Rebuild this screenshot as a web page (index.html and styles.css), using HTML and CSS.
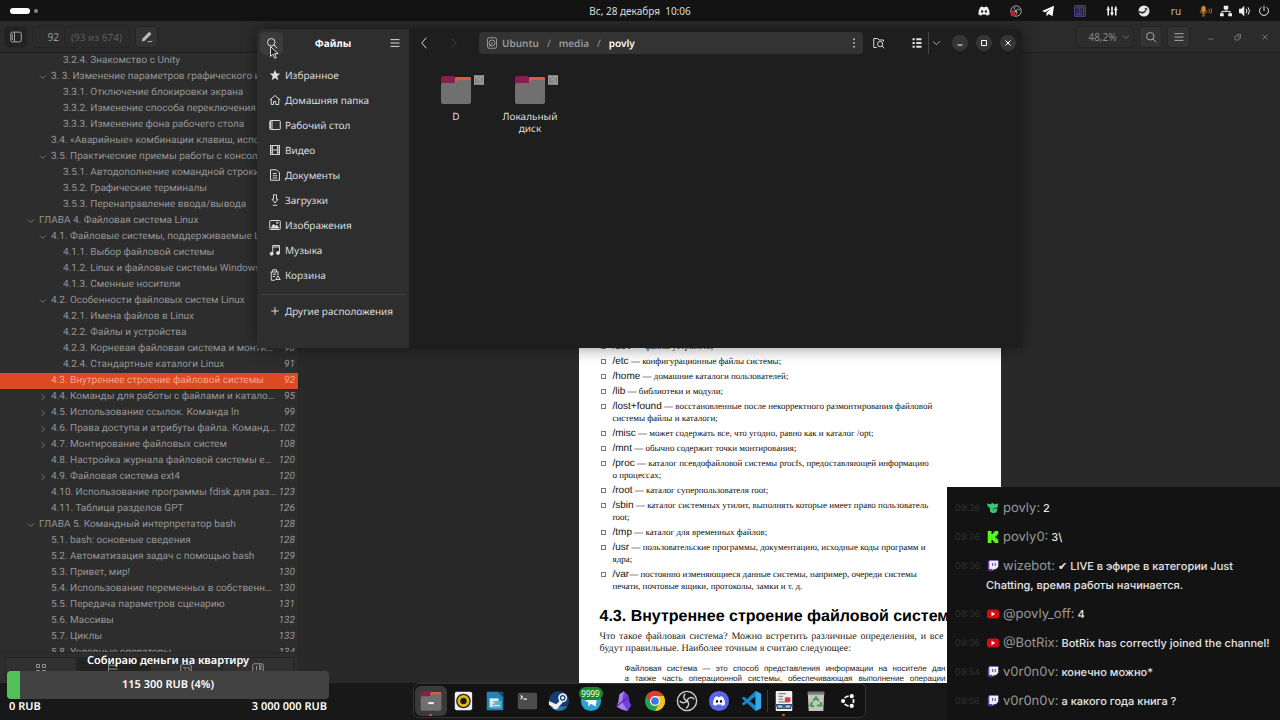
FILE: index.html
```html
<!DOCTYPE html>
<html lang="ru">
<head>
    <meta charset="UTF-8">
    <meta name="viewport" content="width=device-width, initial-scale=1.0">
    <title>Файлы</title>
    <link rel="stylesheet" href="styles.css">
</head>
<body>

    <!-- shared icons -->
    <svg class="sprite" aria-hidden="true">
        <symbol id="search" viewBox="0 0 16 16"><circle cx="7" cy="7" r="5"/><path d="M10.5 10.5 15 15"/></symbol>
        <symbol id="menu" viewBox="0 0 16 16"><path d="M2 3.5h12M2 8h12M2 12.5h12"/></symbol>
        <symbol id="down" viewBox="0 0 16 16"><path d="M2 5l6 6 6-6"/></symbol>
        <symbol id="right" viewBox="0 0 16 16"><path d="M5 2l6 6-6 6"/></symbol>
        <symbol id="left" viewBox="0 0 16 16"><path d="M11 1L5 8l6 7"/></symbol>
        <symbol id="close" viewBox="0 0 16 16"><path d="M3 3l10 10M13 3L3 13"/></symbol>
        <symbol id="min" viewBox="0 0 16 16"><path d="M3 12h10"/></symbol>
        <symbol id="max" viewBox="0 0 16 16"><path d="M3 3h10v10H3z"/></symbol>
        <symbol id="disk" viewBox="0 0 16 16"><rect x="2" y="1" width="12" height="14" rx="2"/><circle cx="8" cy="8" r="4"/><path d="M8 8l-4 5M8 7v2"/></symbol>
        <symbol id="folder" viewBox="0 0 32 30">
            <path d="M2 2h28q1 0 1 1v7H2z" fill="#e0583f" stroke="none"/>
            <path d="M1 3q0-2 2-2h10q2 0 3 2h-1v7H1z" fill="#8a1d50" stroke="none"/>
            <path d="M1 10q0-2 2-2h10q2 0 3-1.500t3-1.500h10q2 0 2 2v20q0 2-2 2H3q-2 0-2-2z" fill="#707070" stroke="none"/>
        </symbol>
        <symbol id="twitch" viewBox="0 0 16 16">
            <path d="M3 0h12v9l-5 5H7l-3 2v-2H1V3z" fill="#5d3aa8" stroke="none"/>
            <path d="M3 1h12v8l-3 3H9l-2 2v-2H3z" fill="#eee" stroke="none"/>
            <path d="M7.500 4v4M11 4v4" stroke="#5d3aa8"/>
        </symbol>
        <symbol id="youtube" viewBox="0 0 16 16"><rect y="2" width="16" height="12" rx="3" fill="#d80b12" stroke="none"/><path d="M6 5l5 3-5 3z" fill="#fff" stroke="none"/></symbol>
        <symbol id="discord" viewBox="0 0 16 16">
            <path d="M3 3q2-1 3-1l1 1h2l1-1q1 0 3 1 3 5 2.500 9.500Q13 14 11.500 14l-1-1.500h-5l-1 1.500Q3 14 .5 12.500 0 8 3 3z" fill="currentColor" stroke="none"/>
            <ellipse class="eye" cx="5.500" cy="8.500" rx="1.400" ry="1.600"/><ellipse class="eye" cx="10.500" cy="8.500" rx="1.400" ry="1.600"/>
        </symbol>
        <symbol id="obs" viewBox="0 0 24 24">
            <circle cx="12" cy="12" r="10.500" fill="#161616" stroke="#d0d0d0" stroke-width="1.500"/>
            <path d="M10 4c-3 3-1 7 2 8M12 12c1-4 5-5 8-2M12 12c3 2 2 6-1 8M12 12c-3 3-6 2-8 0" stroke="#d0d0d0" stroke-width="1.500"/>
            <circle cx="12" cy="12" r="1.500" fill="#d0d0d0" stroke="none"/>
        </symbol>
        <symbol id="steam" viewBox="0 0 24 24">
            <circle cx="16" cy="8.500" r="4" stroke="currentColor" stroke-width="1.800"/><circle cx="16" cy="8.500" r="1.800" fill="currentColor" stroke="none"/>
            <path d="M1 12l8 3.500 4-4 3 2-4 4.500q-1 3-4 3-2 0-3-2.500L1 16z" fill="currentColor" stroke="none"/>
        </symbol>
    </svg>

    <div class="desktop">

        <header class="topbar">
            <button class="workspaces" type="button" aria-label="Рабочие места"><span class="pill"></span><span class="dot"></span></button>
            <button class="clock" type="button">Вс, 28 декабря&nbsp; 10:06</button>
            <div class="tray">
                <button type="button" aria-label="Discord"><svg><use href="#discord"/></svg></button>
                <button type="button" aria-label="OBS">
                    <svg viewBox="0 0 24 24"><use href="#obs"/><circle cx="6" cy="18" r="5" fill="#d5152c" stroke="none"/></svg>
                </button>
                <button type="button" aria-label="Telegram">
                    <svg viewBox="0 0 16 16"><path d="M0 8L16 1l-2 14-5-3-3 3v-5l6-5-8 4.500z" fill="#fff" stroke="none"/></svg>
                </button>
                <button type="button" aria-label="Микшер">
                    <svg class="purple" viewBox="0 0 16 16"><path d="M1 1h14v14H1zM4 4v8M7 4v8M9.500 4v8M12.500 4v8M3 3h10M3 13h10"/></svg>
                </button>
                <button type="button" aria-label="Эквалайзер">
                    <svg viewBox="0 0 16 16"><path d="M3 2v12M8 2v12M13 2v12M1 6h4M6 11h4M11 6h4" stroke="#fff" stroke-width="2"/></svg>
                </button>
                <button type="button" aria-label="Steam">
                    <svg viewBox="0 0 24 24"><circle cx="12" cy="12" r="11" fill="#e8e8e8" stroke="none"/><path d="M1 13l8 3 5-3 4-5" stroke="#222" stroke-width="3"/><circle cx="16" cy="8" r="3" fill="#222"/></svg>
                </button>
                <button type="button" class="lang">ru</button>
                <button type="button" class="status" aria-label="Система">
                    <svg class="mic" viewBox="0 0 20 16"><rect x="4" y="1" width="5" height="9" rx="2.500" fill="#e08b28"/><path d="M2 7v2q1 3 4.500 3T11 9V7M6.500 12v3M4 15h5M14 5q2 3 0 6M17 4q2 4 0 8"/></svg>
                    <svg viewBox="0 0 16 16"><path d="M5 1h6v5H5zM0 11h5v4H0zM11 11h5v4h-5z" fill="#eee" stroke="none"/><path d="M8 5v3M2.500 11V8.500h11V11"/></svg>
                    <svg viewBox="0 0 16 16"><path d="M0 5h3l4-4v14l-4-4H0z" fill="#eee" stroke="none"/><path d="M9.500 5q2 3 0 6M12 3q4 5 0 10"/></svg>
                    <svg viewBox="0 0 16 16"><path d="M8 1v7M4.500 3A6 6 0 1 0 11.500 3"/></svg>
                </button>
            </div>
        </header>

        <main class="viewer">
            <div class="viewer-bar">
                <button class="box-btn pressed" type="button" aria-label="Боковая панель">
                    <svg viewBox="0 0 16 16"><rect x="1" y="1.500" width="14" height="13" rx="2"/><path d="M6 2v12M3 4v8"/></svg>
                </button>
                <div class="page-box">
                    <input type="text" value="92" aria-label="Страница">
                    <span>(93 из 674)</span>
                </div>
                <button class="box-btn" type="button" aria-label="Заметки">
                    <svg viewBox="0 0 16 16"><path d="M1 14l1-4 9-9 3 3-9 9z" fill="#bbb" stroke="none"/><path d="M9 14h6"/></svg>
                </button>
                <div class="spacer"></div>
                <button class="box-btn zoom" type="button">48,2% <svg><use href="#down"/></svg></button>
                <button class="box-btn" type="button" aria-label="Поиск"><svg><use href="#search"/></svg></button>
                <button class="box-btn" type="button" aria-label="Меню"><svg><use href="#menu"/></svg></button>
                <div class="win-btns">
                    <button type="button" aria-label="Свернуть"><svg><use href="#min"/></svg></button>
                    <button type="button" aria-label="Восстановить"><svg viewBox="0 0 16 16"><path d="M2 6h8v8H2zM6 3h8M13 3v8"/></svg></button>
                    <button type="button" aria-label="Закрыть"><svg><use href="#close"/></svg></button>
                </div>
            </div>

            <div class="viewer-body">
                <aside class="outline">
                    <ul class="toc">
                        <li class="l3"><a href="#">3.2.4. Знакомство с Unity</a></li>
                        <li class="l2"><svg><use href="#down"/></svg><a href="#">3. 3. Изменение параметров графического ин…</a></li>
                        <li class="l3"><a href="#">3.3.1. Отключение блокировки экрана</a></li>
                        <li class="l3"><a href="#">3.3.2. Изменение способа переключения я…</a></li>
                        <li class="l3"><a href="#">3.3.3. Изменение фона рабочего стола</a></li>
                        <li class="l2"><a href="#">3.4. «Аварийные» комбинации клавиш, испо…</a></li>
                        <li class="l2"><svg><use href="#down"/></svg><a href="#">3.5. Практические приемы работы с консоль…</a></li>
                        <li class="l3"><a href="#">3.5.1. Автодополнение командной строки</a></li>
                        <li class="l3"><a href="#">3.5.2. Графические терминалы</a></li>
                        <li class="l3"><a href="#">3.5.3. Перенаправление ввода/вывода</a></li>
                        <li class="l1"><svg><use href="#down"/></svg><a href="#">ГЛАВА 4. Файловая система Linux</a></li>
                        <li class="l2"><svg><use href="#down"/></svg><a href="#">4.1. Файловые системы, поддерживаемые Li…</a></li>
                        <li class="l3"><a href="#">4.1.1. Выбор файловой системы</a></li>
                        <li class="l3"><a href="#">4.1.2. Linux и файловые системы Windows</a></li>
                        <li class="l3"><a href="#">4.1.3. Сменные носители</a></li>
                        <li class="l2"><svg><use href="#down"/></svg><a href="#">4.2. Особенности файловых систем Linux</a></li>
                        <li class="l3"><a href="#">4.2.1. Имена файлов в Linux</a></li>
                        <li class="l3"><a href="#">4.2.2. Файлы и устройства</a></li>
                        <li class="l3"><a href="#">4.2.3. Корневая файловая система и монти…</a><i>90</i></li>
                        <li class="l3"><a href="#">4.2.4. Стандартные каталоги Linux</a><i>91</i></li>
                        <li class="l2 selected"><a href="#">4.3. Внутреннее строение файловой системы</a><i>92</i></li>
                        <li class="l2"><svg><use href="#right"/></svg><a href="#">4.4. Команды для работы с файлами и катало…</a><i>95</i></li>
                        <li class="l2"><svg><use href="#right"/></svg><a href="#">4.5. Использование ссылок. Команда ln</a><i>99</i></li>
                        <li class="l2"><svg><use href="#right"/></svg><a href="#">4.6. Права доступа и атрибуты файла. Команд…</a><i>102</i></li>
                        <li class="l2"><svg><use href="#right"/></svg><a href="#">4.7. Монтирование файловых систем</a><i>108</i></li>
                        <li class="l2"><a href="#">4.8. Настройка журнала файловой системы e…</a><i>120</i></li>
                        <li class="l2"><svg><use href="#right"/></svg><a href="#">4.9. Файловая система ext4</a><i>120</i></li>
                        <li class="l2"><a href="#">4.10. Использование программы fdisk для раз…</a><i>123</i></li>
                        <li class="l2"><a href="#">4.11. Таблица разделов GPT</a><i>126</i></li>
                        <li class="l1"><svg><use href="#down"/></svg><a href="#">ГЛАВА 5. Командный интерпретатор bash</a><i>128</i></li>
                        <li class="l2"><a href="#">5.1. bash: основные сведения</a><i>128</i></li>
                        <li class="l2"><a href="#">5.2. Автоматизация задач с помощью bash</a><i>129</i></li>
                        <li class="l2"><a href="#">5.3. Привет, мир!</a><i>130</i></li>
                        <li class="l2"><a href="#">5.4. Использование переменных в собственн…</a><i>130</i></li>
                        <li class="l2"><a href="#">5.5. Передача параметров сценарию</a><i>131</i></li>
                        <li class="l2"><a href="#">5.6. Массивы</a><i>132</i></li>
                        <li class="l2"><a href="#">5.7. Циклы</a><i>133</i></li>
                        <li class="l2"><a href="#">5.8. Условные операторы</a><i>134</i></li>
                    </ul>
                    <div class="outline-tabs">
                        <button type="button" aria-label="Миниатюры"><svg viewBox="0 0 16 16"><path d="M2 2h4v4H2zM10 2h4v4h-4zM2 10h4v4H2zM10 10h4v4h-4z"/></svg></button>
                        <button type="button" class="active" aria-label="Содержание"><svg viewBox="0 0 16 16"><path d="M2 1v13h12M2 3h12M2 8h12"/></svg></button>
                        <button type="button" aria-label="Заметки"><svg viewBox="0 0 16 16"><rect x="1" y="2" width="14" height="11" rx="2"/><path d="M4 6h3v4M9 6h3v4"/></svg></button>
                        <button type="button" aria-label="Закладки"><svg viewBox="0 0 16 16"><rect x="1" y="1" width="14" height="14" rx="2"/><path d="M6 4v6M10 2v7h2V2"/></svg></button>
                    </div>
                </aside>

                <div class="canvas">
                    <article class="sheet">
                        <ul class="dirs">
                            <li><b>/dev</b> — файлы устройств;</li>
                            <li><b>/etc</b> — конфигурационные файлы системы;</li>
                            <li><b>/home</b> — домашние каталоги пользователей;</li>
                            <li><b>/lib</b> — библиотеки и модули;</li>
                            <li><b>/lost+found</b> — восстановленные после некорректного размонтирования файловой<br>системы файлы и каталоги;</li>
                            <li><b>/misc</b> — может содержать все, что угодно, равно как и каталог /opt;</li>
                            <li><b>/mnt</b> — обычно содержит точки монтирования;</li>
                            <li><b>/proc</b> — каталог псевдофайловой системы procfs, предоставляющей информацию<br>о процессах;</li>
                            <li><b>/root</b> — каталог суперпользователя root;</li>
                            <li><b>/sbin</b> — каталог системных утилит, выполнять которые имеет право пользователь<br>root;</li>
                            <li><b>/tmp</b> — каталог для временных файлов;</li>
                            <li><b>/usr</b> — пользовательские программы, документацию, исходные коды программ и<br>ядра;</li>
                            <li><b>/var</b>— постоянно изменяющиеся данные системы, например, очереди системы<br>печати, почтовые ящики, протоколы, замки и т. д.</li>
                        </ul>
                        <h2>4.3. Внутреннее строение файловой системы</h2>
                        <p>Что такое файловая система? Можно встретить различные определения, и все будут правильные. Наиболее точным я считаю следующее:</p>
                        <blockquote>
                            <span>Файловая система — это способ представления информации на носителе дан</span>
                            <span>а также часть операционной системы, обеспечивающая выполнение операции</span>
                        </blockquote>
                    </article>
                </div>
            </div>
        </main>

        <footer class="dock-area">
            <nav class="dock">
                <button type="button" class="open" aria-label="Файлы">
                    <svg viewBox="0 0 32 30"><use href="#folder"/><path d="M12 18h8" stroke="#eee" stroke-width="3"/></svg>
                </button>
                <button type="button" aria-label="Rhythmbox">
                    <svg viewBox="0 0 24 24"><rect x="3" y="2" width="19" height="20" rx="2" fill="#eee"/><circle cx="12.500" cy="12" r="8" fill="#222"/><circle cx="12.500" cy="12" r="5" fill="none" stroke="#e8b90f" stroke-width="3"/><circle cx="12.500" cy="12" r="2" fill="#111"/></svg>
                </button>
                <button type="button" aria-label="Writer">
                    <svg viewBox="0 0 24 24"><path d="M3 2h12l6 6v14H3z" fill="#2583b1"/><path d="M15 2h6v6z" fill="#0e5378"/><path d="M6 9h10v10H6z" fill="#bfe0ee"/><path d="M10 12h9v8h-9z" fill="#65add0"/><path d="M7 11h8M7 14h5M11 17h6" stroke="#fff" stroke-width="1"/></svg>
                </button>
                <button type="button" aria-label="Терминал">
                    <svg viewBox="0 0 24 24"><rect x="2" y="3" width="21" height="18" rx="2" fill="#4c4c4c"/><path d="M5 6l2 2-2 2M8 10h4" stroke="#eee"/></svg>
                </button>
                <button type="button" aria-label="Steam">
                    <svg class="steam-dock" viewBox="0 0 24 24"><circle cx="12" cy="12" r="11" fill="#153d70"/><path d="M3 18a11 11 0 0 0 18 0z" fill="#2878b0"/><use href="#steam"/></svg>
                </button>
                <button type="button" aria-label="Telegram">
                    <svg viewBox="0 0 24 24"><circle cx="12" cy="12" r="11" fill="#2ba2d4"/><path d="M5 12l14-6-2 12-5-3-3 3v-5z" fill="#fff"/></svg>
                    <span class="badge">9999</span>
                </button>
                <button type="button" aria-label="Obsidian">
                    <svg viewBox="0 0 24 24"><path d="M13 1l5 5 1 7 2 4-4 6-7-2-5-3 2-5 1-8z" fill="#7540d8"/><path d="M13 1l-2 12 6 10-7-2-5-3 2-5 1-8z" fill="#a980ed"/><path d="M11 13l7-5M11 13l-6 5" stroke="#4c23a4"/></svg>
                </button>
                <button type="button" aria-label="Chrome">
                    <svg viewBox="0 0 24 24"><circle cx="12" cy="12" r="11" fill="#23a455"/><path d="M2.500 6.500A11 11 0 0 1 21.500 6.500H12L7.500 15z" fill="#df3b30"/><path d="M21.500 6.500A11 11 0 0 1 12 23l5-9-5-7.500z" fill="#f6c51b"/><circle cx="12" cy="12" r="5.500" fill="#fff"/><circle cx="12" cy="12" r="4.200" fill="#3978e6"/></svg>
                </button>
                <button type="button" aria-label="OBS"><svg viewBox="0 0 24 24"><use href="#obs"/></svg></button>
                <button type="button" aria-label="Discord">
                    <svg class="discord-dock" viewBox="0 0 24 24"><circle cx="12" cy="12" r="11" fill="#5964e8"/><use href="#discord" x="5" y="5" width="14" height="14"/></svg>
                </button>
                <button type="button" aria-label="VS Code">
                    <svg viewBox="0 0 24 24"><path d="M17 1l6 3v16l-6 3L2 9l2-2 13 10V7L4 17l-2-2z" fill="#1687cb"/><path d="M17 1l6 3v16l-6 3z" fill="#35a8eb"/></svg>
                </button>
                <span class="dock-sep"></span>
                <button type="button" class="running" aria-label="Документы">
                    <svg viewBox="0 0 24 24"><rect x="3" y="1" width="18" height="22" rx="1" fill="#eee"/><path d="M6 4h8M6 7h5M6 10h5M6 13h12" stroke="#888"/><path d="M13 8h6v5h-6z" fill="#dd3c38"/><path d="M4 16h7v4H5zM13 16h7l-1 4h-6zM11 17h2" fill="#adc2d8" stroke="#294b6b" stroke-width="1.500"/></svg>
                </button>
                <button type="button" aria-label="Корзина">
                    <svg viewBox="0 0 24 24"><path d="M3 2h18l-1 21H4z" fill="#c4c4c0"/><path d="M3 2h18v3H3z" fill="#777"/><path d="M9 12l3-4 3 4M17 13l1 4h-5M10 18l-4-1 2-4" fill="none" stroke="#36a344" stroke-width="2.200"/></svg>
                </button>
                <button type="button" aria-label="Приложения">
                    <svg class="ubuntu" viewBox="0 0 24 24"><circle cx="13" cy="12" r="6.500" stroke="#fff" stroke-width="2.500"/><g fill="#fff" stroke="#151515" stroke-width="1.500"><circle cx="5.500" cy="12" r="3.500"/><circle cx="17" cy="5.500" r="3.500"/><circle cx="17" cy="18.500" r="3.500"/></g></svg>
                </button>
            </nav>
        </footer>

        <section class="files">
            <aside class="places">
                <div class="places-head">
                    <button type="button" class="hovered" aria-label="Поиск"><svg><use href="#search"/></svg></button>
                    <h1>Файлы</h1>
                    <button type="button" aria-label="Меню"><svg><use href="#menu"/></svg></button>
                </div>
                <nav>
                    <a href="#"><svg viewBox="0 0 16 16"><path d="M8 1l2 5h5l-4 3.500 1.500 5.500L8 12l-4.500 3L5 9.500 1 6h5z" fill="currentColor" stroke="none"/></svg>Избранное</a>
                    <a href="#"><svg viewBox="0 0 16 16"><path d="M1 8l7-6 7 6M3 7v7h3v-4h3v4h4V7"/></svg>Домашняя папка</a>
                    <a href="#"><svg viewBox="0 0 16 16"><rect x="1" y="2" width="14" height="12" rx="1"/><path d="M4 2v12M2 3v10"/></svg>Рабочий стол</a>
                    <a href="#"><svg viewBox="0 0 16 16"><rect x="2" y="2" width="12" height="12"/><path d="M4.500 2v12M11.500 2v12M5 8h6M2 5h2M2 8h2M2 11h2M12 5h2M12 8h2M12 11h2"/></svg>Видео</a>
                    <a href="#"><svg viewBox="0 0 16 16"><path d="M2 1h8l4 4v10H2zM5 6h5M5 9h6M5 12h6"/></svg>Документы</a>
                    <a href="#"><svg viewBox="0 0 16 16"><path d="M6 1h4v6h2l-4 5-4-5h2zM5 15h6"/></svg>Загрузки</a>
                    <a href="#"><svg viewBox="0 0 16 16"><rect x="1" y="2" width="14" height="12" rx="1"/><path d="M3 12l3-5 2 3 2-2 3 4z" fill="currentColor"/><circle cx="11" cy="5" r="1"/></svg>Изображения</a>
                    <a href="#"><svg viewBox="0 0 16 16"><path d="M5 13V2h9v10M5 4h9"/><circle cx="3.500" cy="13" r="2" fill="currentColor"/><circle cx="12" cy="12" r="2" fill="currentColor"/></svg>Музыка</a>
                    <a href="#"><svg viewBox="0 0 16 16"><path d="M2 4h11M5 4V1h5v3M3 4v11h5M5 7h5M5 10h3M12 5v3"/><path d="M12 9l3 5H9z"/></svg>Корзина</a>
                </nav>
                <a class="other" href="#"><svg viewBox="0 0 16 16"><path d="M8 3v10M3 8h10"/></svg>Другие расположения</a>
            </aside>

            <div class="browser">
                <div class="browser-head">
                    <button type="button" aria-label="Назад"><svg><use href="#left"/></svg></button>
                    <button type="button" disabled aria-label="Вперёд"><svg><use href="#right"/></svg></button>
                    <div class="crumbs">
                        <svg><use href="#disk"/></svg>
                        <a href="#">Ubuntu</a><span>/</span><a href="#">media</a><span>/</span><a class="current" href="#">povly</a>
                        <button type="button" aria-label="Ещё"><svg viewBox="0 0 16 16"><path d="M7 2h2v2H7zM7 7h2v2H7zM7 12h2v2H7z" fill="currentColor" stroke="none"/></svg></button>
                    </div>
                    <button type="button" aria-label="Искать в папке"><svg viewBox="0 0 16 16"><path d="M5 14H1V2h5l2 2h6v2"/><circle cx="9.500" cy="9.500" r="3.500"/><path d="M12 12l3 3"/></svg></button>
                    <div class="view-btns">
                        <button type="button" aria-label="Список"><svg viewBox="0 0 16 16"><path d="M2 3h3M2 8h3M2 13h3M7 3h7M7 8h7M7 13h7" stroke-width="2.500"/></svg></button>
                        <button type="button" aria-label="Вид"><svg><use href="#down"/></svg></button>
                    </div>
                    <div class="round-btns">
                        <button type="button" aria-label="Свернуть"><svg><use href="#min"/></svg></button>
                        <button type="button" aria-label="Развернуть"><svg><use href="#max"/></svg></button>
                        <button type="button" aria-label="Закрыть"><svg><use href="#close"/></svg></button>
                    </div>
                </div>
                <div class="icons">
                    <a href="#"><span class="thumb"><svg><use href="#folder"/></svg><svg class="emblem"><use href="#disk"/></svg></span>D</a>
                    <a href="#"><span class="thumb"><svg><use href="#folder"/></svg><svg class="emblem"><use href="#disk"/></svg></span>Локальный диск</a>
                </div>
            </div>
        </section>

        <section class="goal">
            <h2>Собираю деньги на квартиру</h2>
            <div class="goal-bar"><div class="goal-fill" style="width: 4%"></div><span>115 300 RUB (4%)</span></div>
            <div class="goal-range"><span>0 RUB</span><span>3 000 000 RUB</span></div>
        </section>

        <section class="chat">
            <div class="msg"><time>09:36</time><p><svg viewBox="0 0 16 16"><path d="M0 2l5 1 2-2 3 2 5-1-1 5-2 1 2 2-2 4-4 1-4-2V8L1 6z" fill="#3fc477" stroke="none"/><path d="M8 11l2-3 2 1" stroke="#17583a"/></svg><b>povly:</b> 2</p></div>
            <div class="msg"><time>09:36</time><p><svg viewBox="0 0 16 16"><path d="M1 0h5v4h2V2h2V0h5v5h-2v2h-2v2h2v2h2v5h-5v-2H8v-2H6v4H1z" fill="#53fc18" stroke="none"/></svg><b>povly0:</b> 3\</p></div>
            <div class="msg"><time>09:36</time><p><svg><use href="#twitch"/></svg><b>wizebot:</b> ✔ LIVE в эфире в категории Just Chatting, время работы начинается.</p></div>
            <div class="msg"><time>09:36</time><p><svg><use href="#youtube"/></svg><b>@povly_off:</b> 4</p></div>
            <div class="msg"><time>09:36</time><p><svg><use href="#youtube"/></svg><b>@BotRix:</b> BotRix has correctly joined the channel!</p></div>
            <div class="msg"><time>09:54</time><p><svg><use href="#twitch"/></svg><b>v0r0n0v:</b> конечно можно*</p></div>
            <div class="msg"><time>09:56</time><p><svg><use href="#twitch"/></svg><b>v0r0n0v:</b> а какого года книга ?</p></div>
        </section>

        <svg class="cursor" viewBox="0 0 16 24"><path d="M2 1v17l4-4 3 7 3-1-3-7h6z" fill="#222" stroke="#eee" stroke-width="1.500"/></svg>
    </div>

</body>
</html>
```

FILE: styles.css
```css
* {
    box-sizing: border-box;
}
body {
    margin: 0;
    font-family: "Noto Sans", sans-serif;
    font-size: 10px;
    line-height: 16px;
    text-rendering: geometricPrecision;
    color: #ddd;
    background: #181818;
}
h1, h2, p, ul, blockquote {
    margin: 0;
    padding: 0;
}
ul {
    list-style: none;
}
a {
    color: inherit;
    text-decoration: none;
}
button, input {
    font: inherit;
    color: inherit;
    background: none;
    border: 0;
    padding: 0;
}
button {
    display: flex;
    align-items: center;
    justify-content: center;
}
svg {
    width: 12px;
    height: 12px;
    flex: none;
    fill: none;
    stroke: currentColor;
    stroke-width: 1.3;
}
.sprite {
    display: none;
}
.desktop {
    position: relative;
    display: flex;
    flex-direction: column;
    height: 100vh;
    overflow: hidden;
}

/* top panel */
.topbar {
    display: grid;
    grid-template-columns: 1fr auto 1fr;
    align-items: center;
    height: 21px;
    background: #131313;
}
.workspaces {
    justify-self: start;
    gap: 4px;
    padding-left: 10px;
}
.pill {
    width: 20px;
    height: 6px;
    border-radius: 3px;
    background: #fff;
}
.dot {
    width: 4px;
    height: 4px;
    border-radius: 50%;
    background: #888;
}
.tray {
    display: flex;
    justify-content: flex-end;
    padding-right: 10px;
}
.tray button {
    width: 32px;
    color: #eee;
}
.tray .status {
    width: auto;
    gap: 7px;
    padding-left: 7px;
}
.tray .lang {
    color: #bbb;
}
.mic {
    width: 14px;
    color: #b87320;
}
.purple {
    color: #5e4db8;
}
.eye {
    fill: #131313;
    stroke: none;
}

/* document viewer */
.viewer {
    flex: 1;
    min-height: 0;
    display: flex;
    flex-direction: column;
    color: #959595;
    background: #292929;
}
.viewer-bar {
    display: flex;
    align-items: center;
    gap: 5px;
    height: 32px;
    padding: 0 5px 0 4px;
    background: #2b2b2b;
    border-bottom: 1px solid #1e1e1e;
}
.box-btn {
    width: 23px;
    height: 22px;
    border: 1px solid #252525;
    border-radius: 4px;
    background: #333;
    color: #aaa;
}
.box-btn.pressed {
    background: #222;
}
.box-btn.zoom {
    width: 58px;
    gap: 5px;
    padding-left: 8px;
    background: #2d2d2d;
    color: #888;
}
.box-btn.zoom svg {
    width: 8px;
}
.page-box {
    display: flex;
    align-items: center;
    width: 98px;
    height: 22px;
    border: 1px solid #252525;
    border-radius: 4px;
    color: #5c5c5c;
}
.page-box input {
    width: 32px;
    height: 20px;
    padding-right: 5px;
    margin-right: 6px;
    border-right: 1px solid #252525;
    text-align: right;
    color: #999;
}
.spacer {
    flex: 1;
}
.win-btns {
    display: flex;
    gap: 6px;
    padding-left: 5px;
}
.win-btns button {
    width: 21px;
    height: 22px;
}
.win-btns svg {
    width: 8px;
}
.viewer-body {
    flex: 1;
    min-height: 0;
    display: flex;
}
.outline {
    width: 299px;
    display: flex;
    flex-direction: column;
    background: #2d2d2d;
    border-right: 1px solid #252525;
    font-family: Roboto, sans-serif;
}
.toc {
    flex: 1;
    min-height: 0;
    overflow: hidden;
}
.toc li {
    display: flex;
    align-items: center;
    height: 16px;
    padding-right: 3px;
}
.toc a {
    flex: 1;
    white-space: nowrap;
}
.toc i {
    text-align: right;
}
.toc svg {
    width: 8px;
    height: 8px;
    margin: 0 4px 0 -12px;
}
.toc .l1 {
    padding-left: 39px;
}
.toc .l2 {
    padding-left: 51px;
}
.toc .l3 {
    padding-left: 63px;
}
.toc .selected {
    background: #dc4a24;
    color: #f3a58d;
}
.outline-tabs {
    display: flex;
    height: 31px;
    padding: 4px 4px 3px 5px;
    border-top: 1px solid #252525;
}
.outline-tabs button {
    flex: 1;
    border: 1px solid #252525;
    background: #303030;
}
.outline-tabs .active {
    background: #222;
}
.canvas {
    flex: 1;
    display: flex;
    justify-content: center;
    overflow: hidden;
}
.sheet {
    width: 422px;
    padding: 287px 57px 0 21px;
    background: #fff;
    color: #222;
    font: 10px/12px "Liberation Serif", serif;
    white-space: nowrap;
}
.dirs {
    display: flex;
    flex-direction: column;
    gap: 3px;
    padding-left: 13px;
    font-size: 9px;
    color: #111;
}
.dirs li::before {
    content: "";
    box-sizing: border-box;
    float: left;
    width: 5px;
    height: 5px;
    margin: 4px 0 0 -12px;
    border: 1px solid #777;
}
.dirs b {
    font: 10px/10px "Liberation Sans", sans-serif;
}
.sheet h2 {
    margin: 16px 0 5px;
    font: bold 16px/18px "Liberation Sans", sans-serif;
    color: #000;
}
.sheet p {
    text-align: justify;
    white-space: normal;
}
.sheet blockquote {
    width: 321px;
    margin: 9px 0 0 25px;
    font: 8px/10px "Liberation Sans", sans-serif;
}
.sheet blockquote span {
    display: block;
    white-space: normal;
    text-align-last: justify;
}

/* dock */
.dock-area {
    display: flex;
    justify-content: center;
    height: 37px;
    padding-right: 2px;
    background: #181818;
}
.dock {
    display: flex;
    align-items: center;
    height: 35px;
    padding: 0 1px;
    border: 1px solid #333;
    border-radius: 6px;
    background: #131313;
}
.dock button {
    position: relative;
    width: 32px;
    height: 30px;
}
.dock svg {
    width: 22px;
    height: 22px;
    stroke: none;
}
.dock .open {
    background: #3a3a3a;
    border-radius: 6px;
}
.dock .ubuntu {
    width: 18px;
    height: 18px;
}
.dock .open::after, .dock .running::after {
    content: "";
    position: absolute;
    bottom: 0;
    width: 3px;
    height: 2px;
    border-radius: 1px;
    background: #e0562b;
}
.dock-sep {
    width: 1px;
    height: 22px;
    background: #3a3a3a;
}
.steam-dock {
    color: #eee;
}
.discord-dock {
    color: #fff;
}
.badge {
    position: absolute;
    top: 1px;
    left: 4px;
    width: 24px;
    height: 13px;
    border-radius: 7px;
    background: #178a2d;
    color: #fff;
    font-size: 8px;
    line-height: 13px;
}

/* file manager window */
.files {
    position: absolute;
    top: 29px;
    left: 257px;
    right: 258px;
    height: 319px;
    display: flex;
    border-radius: 6px 6px 0 0;
    background: #1e1e1e;
    box-shadow: 0 0 16px rgba(0, 0, 0, 0.45);
    overflow: hidden;
}
.places {
    width: 152px;
    background: #2e2e2e;
}
.places-head {
    display: flex;
    align-items: center;
    justify-content: space-between;
    height: 28px;
    padding: 0 3px;
}
.places-head h1 {
    font-size: 10px;
    line-height: 16px;
    color: #fff;
}
.places-head button {
    width: 23px;
    height: 23px;
    border-radius: 5px;
}
.places-head .hovered {
    background: #3b3b3b;
}
.places nav {
    padding: 5px 0 7px;
}
.places a {
    display: flex;
    align-items: center;
    gap: 4px;
    height: 25px;
    padding-left: 12px;
}
.places .other {
    height: 33px;
    margin: 0 4px;
    padding-left: 8px;
    border-top: 1px solid #444;
}
.browser {
    flex: 1;
}
.browser-head {
    display: flex;
    align-items: center;
    height: 28px;
    padding: 0 6px 0 4px;
}
.browser-head button {
    width: 22px;
    height: 22px;
}
.browser-head button:disabled {
    margin: 0 14px 0 8px;
    color: #444;
}
.browser-head .crumbs {
    flex: 1;
    display: flex;
    align-items: center;
    gap: 8px;
    height: 22px;
    margin-right: 5px;
    padding-left: 7px;
    border-radius: 4px;
    background: #333;
    color: #999;
    font-weight: 600;
}
.crumbs svg {
    margin-right: -4px;
}
.crumbs span {
    font-weight: normal;
}
.crumbs .current {
    color: #fff;
}
.crumbs button {
    margin-left: auto;
    color: #ddd;
}
.view-btns {
    display: flex;
    margin-left: 16px;
}
.view-btns button + button {
    width: 16px;
    border-left: 1px solid #444;
}
.view-btns button + button svg {
    width: 9px;
}
.browser-head .round-btns {
    display: flex;
    gap: 8px;
    padding-left: 8px;
}
.browser-head .round-btns button {
    width: 16px;
    height: 16px;
    border-radius: 50%;
    background: #353535;
    color: #fff;
}
.round-btns svg {
    width: 8px;
    height: 8px;
    stroke-width: 2;
}
.icons {
    display: flex;
    gap: 10px;
    padding: 17px 15px;
}
.icons a {
    width: 64px;
    line-height: 12px;
    text-align: center;
}
.thumb {
    position: relative;
    display: flex;
    justify-content: center;
    margin-bottom: 4px;
}
.thumb svg {
    width: 32px;
    height: 32px;
}
.thumb .emblem {
    position: absolute;
    top: 1px;
    right: 4px;
    width: 10px;
    height: 10px;
    border-radius: 1px;
    background: #aaa;
    color: #666;
}

/* stream overlays */
.goal {
    position: absolute;
    left: 7px;
    bottom: 5px;
    width: 322px;
    color: #fff;
    font-size: 11px;
    font-weight: 600;
    line-height: 16px;
}
.goal h2 {
    font-size: 11px;
    font-weight: 600;
    line-height: 16px;
    text-align: center;
    margin-bottom: 2px;
}
.goal-bar {
    display: grid;
    align-items: center;
    height: 28px;
    border-radius: 4px;
    background: #424242;
    text-align: center;
    overflow: hidden;
}
.goal-bar > * {
    grid-area: 1 / 1;
}
.goal-fill {
    height: 28px;
    background: #50c058;
}
.goal-range {
    display: flex;
    justify-content: space-between;
    padding: 0 2px;
}
.chat {
    position: absolute;
    top: 487px;
    right: 0;
    bottom: 0;
    width: 333px;
    display: flex;
    flex-direction: column;
    gap: 10px;
    padding: 12px 8px 0;
    background: #131313;
    font: 500 11px/19px Inter, sans-serif;
    color: #e6e6e6;
    overflow: hidden;
}
.msg {
    display: flex;
}
.msg time {
    width: 31px;
    flex: none;
    font-size: 9px;
    font-weight: 400;
    color: #303030;
}
.msg svg {
    margin: 0 4px 0 1px;
    vertical-align: -2px;
}
.msg b {
    font-size: 13px;
    line-height: 16px;
    font-weight: 400;
    color: #999;
}
.cursor {
    position: absolute;
    top: 46px;
    left: 269px;
    width: 10px;
    height: 14px;
}
```
